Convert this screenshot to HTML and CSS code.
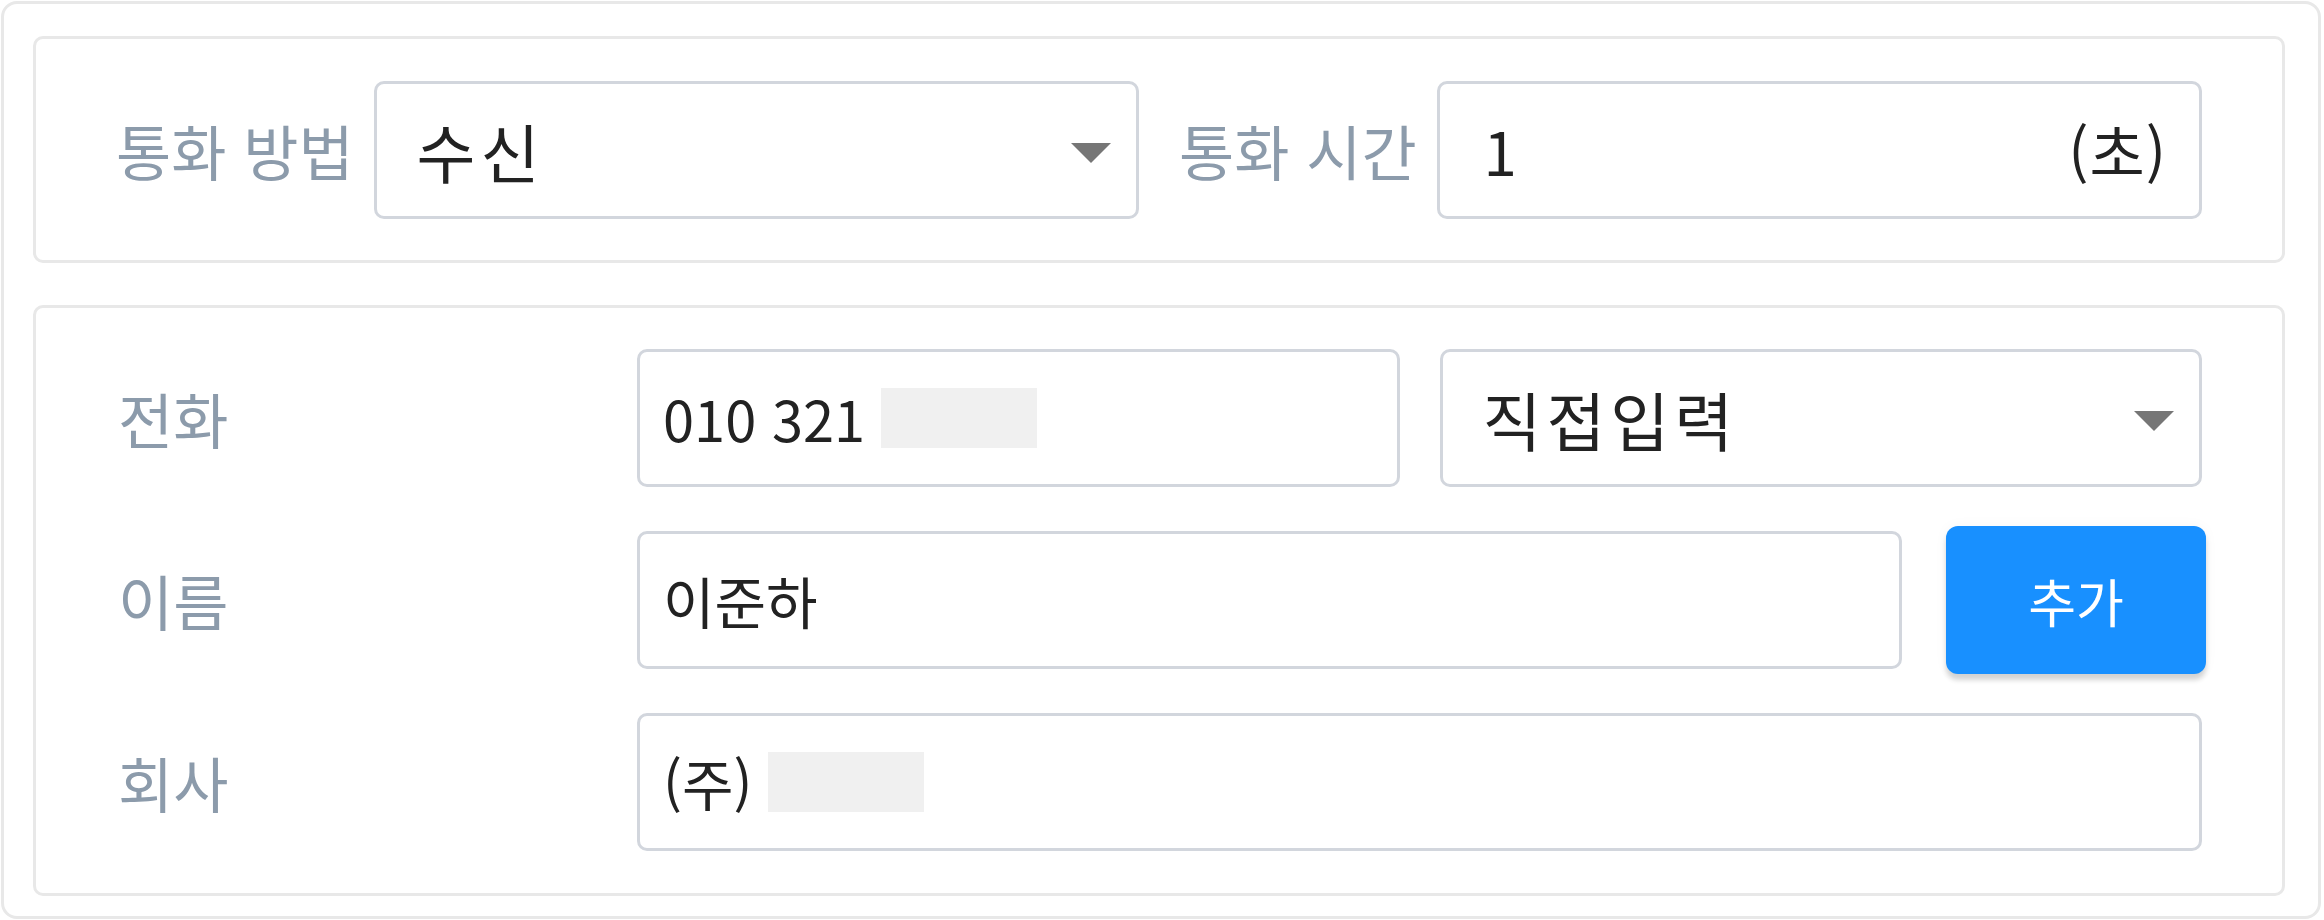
FILE: index.html
```html
<!DOCTYPE html>
<html lang="ko">

<head>
    <meta charset="UTF-8">
    <meta name="viewport" content="width=device-width, initial-scale=1.0">
    <title>통화 기록</title>
    <link rel="stylesheet" href="styles.css">
</head>

<body>
    <div class="wrap">
        <!-- call info -->
        <div class="card card-top">
            <div class="group">
                <span class="label">통화 방법</span>
                <div class="field select">
                    <span class="value big">수신</span>
                    <span class="arrow"></span>
                </div>
            </div>
            <div class="group">
                <span class="label">통화 시간</span>
                <div class="field time">
                    <span class="value big">1</span>
                    <span class="suffix big">(초)</span>
                </div>
            </div>
        </div>

        <!-- contact -->
        <div class="card card-bottom">
            <div class="row row-phone">
                <span class="label">전화</span>
                <div class="field text">
                    <span class="value">010 321</span>
                    <span class="masked"></span>
                </div>
                <div class="field select">
                    <span class="value big">직접입력</span>
                    <span class="arrow"></span>
                </div>
            </div>
            <div class="row row-name">
                <span class="label">이름</span>
                <div class="field text">
                    <span class="value">이준하</span>
                </div>
                <button class="btn-add">추가</button>
            </div>
            <div class="row row-company">
                <span class="label">회사</span>
                <div class="field text">
                    <span class="value">(주)</span>
                    <span class="masked"></span>
                </div>
            </div>
        </div>
    </div>
</body>

</html>
```

FILE: styles.css
```css
body {
    margin: 0;
    background-color: #fff;
    font-family: 'Noto Sans CJK KR', 'Noto Sans', sans-serif;
}

.wrap {
    margin: 1px 3px 1px 1px;
    height: 918px;
    box-sizing: border-box;
    border: 3px solid #e8e8e8;
    border-radius: 16px;
    padding: 32px 33px 20px 29px;
}

.card {
    border: 3px solid #e8e8e8;
    border-radius: 10px;
    box-sizing: border-box;
}

.card-top {
    display: flex;
    gap: 40px;
    padding: 42px 80px 41px 80px;
}

.card-bottom {
    margin-top: 42px;
    padding: 41px 80px 42px 80px;
    display: flex;
    flex-direction: column;
    gap: 39px;
}

.group {
    flex: 1;
    display: flex;
    align-items: center;
    gap: 20px;
}

.label {
    font-size: 60px;
    color: #8c9bab;
    white-space: nowrap;
    line-height: 1;
}

.field {
    flex: 1;
    height: 138px;
    box-sizing: border-box;
    border: 3px solid #d2d6dd;
    border-radius: 10px;
    background-color: #fff;
    display: flex;
    align-items: center;
    min-width: 0;
}

.value {
    font-size: 56px;
    color: #222;
    line-height: 1;
    white-space: nowrap;
}

.big {
    font-size: 60px;
    letter-spacing: 1px;
}

.select {
    padding: 0 25px 0 40px;
}

.select .value {
    font-size: 64px;
    letter-spacing: 5px;
}

.arrow {
    margin-left: auto;
    margin-top: 6px;
    width: 0;
    height: 0;
    border-left: 20px solid transparent;
    border-right: 20px solid transparent;
    border-top: 20px solid #767676;
}

.time {
    padding: 0 32px 0 44px;
}

.suffix {
    margin-left: auto;
    color: #222;
    line-height: 1;
}

.row {
    display: grid;
    align-items: center;
    column-gap: 40px;
}

.row-phone {
    grid-template-columns: 481px 1fr 1fr;
}

.row-name {
    grid-template-columns: 481px 1fr 260px;
    height: 148px;
    margin-right: -4px;
}

.row-name .field {
    margin-right: 4px;
}

.row-company {
    grid-template-columns: 481px 1fr;
}

.row .label {
    padding-left: 2px;
}

.text {
    padding: 0 23px;
}

.masked {
    display: inline-block;
    width: 156px;
    height: 60px;
    margin-left: 16px;
    background-color: #f0f0f0;
}

.btn-add {
    width: 260px;
    height: 148px;
    border: none;
    border-radius: 12px;
    background-color: #1890ff;
    color: #fff;
    font-family: 'Noto Sans CJK KR', 'Noto Sans', sans-serif;
    font-size: 52px;
    box-shadow: 0 6px 5px rgba(0, 0, 0, 0.16), 0 0 14px rgba(0, 0, 0, 0.04);
    cursor: pointer;
}
```
